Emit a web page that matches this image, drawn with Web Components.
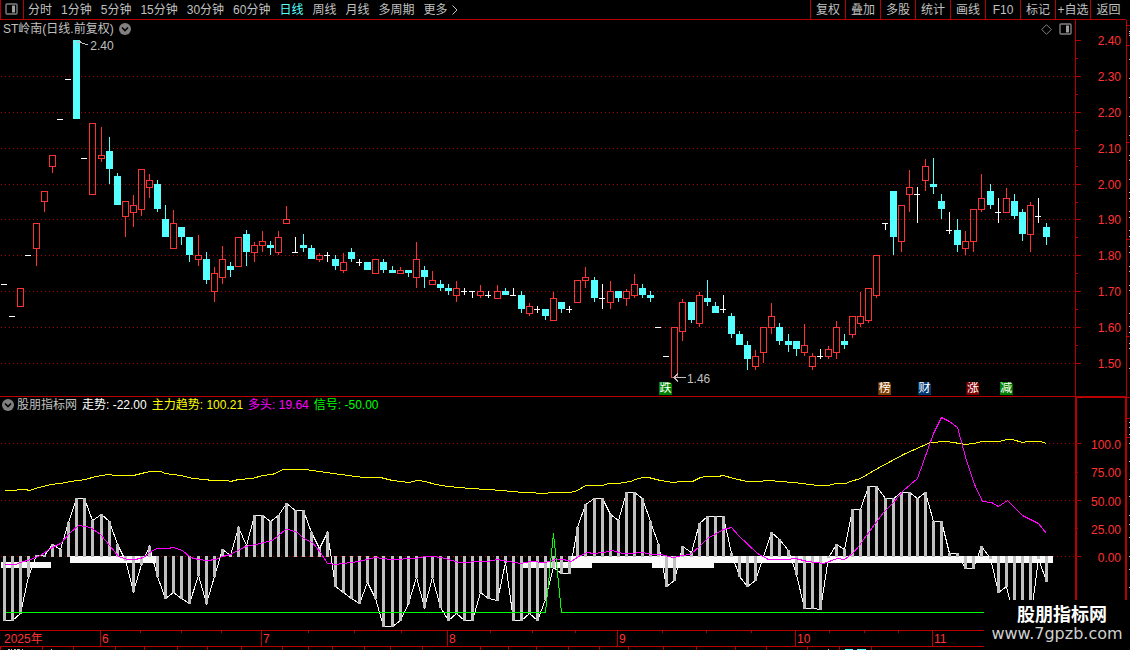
<!DOCTYPE html>
<html lang="zh-CN">
<head>
<meta charset="utf-8">
<title>ST岭南 日线</title>
<style>
  :root {
    --line: #b80000;
    --axis: #ff3232;
    --text: #c0c0c0;
    --down: #54ffff;
    --up: #ff3232;
  }
  html, body { margin: 0; background: #000; }
  body {
    font: 12px/16px "Liberation Sans", "Noto Sans CJK SC", sans-serif;
    color: var(--text);
  }
</style>
</head>
<body>
<stock-app></stock-app>

<script>
const barX = i => Math.floor(4.07 + 8.082 * i);

const define = (name, html, setup) => {
  const template = document.createElement('template');
  template.innerHTML = html;
  customElements.define(name, class extends HTMLElement {
    constructor() {
      super();
      this.attachShadow({ mode: 'open' }).append(template.content.cloneNode(true));
    }
    connectedCallback() {
      if (setup && !this.ready) { this.ready = true; setup(this, this.shadowRoot); }
    }
  });
};

/* ---------- small pieces ---------- */
define('tool-item', `
  <style>
    :host { display: flex; align-items: center; justify-content: center; }
    button { all: unset; font: inherit; color: inherit; white-space: nowrap; cursor: pointer; }
    :host([active]) { color: var(--down); }
  </style>
  <button type="button"><slot></slot></button>`);

define('split-icon', `
  <style>:host { display: block; width: 13px; height: 12px; } svg { display: block; }</style>
  <svg width="13" height="12" viewBox="0 0 13 12" aria-hidden="true">
    <rect x="1" y="1" width="11" height="10" rx="1" fill="none" stroke="#808080" stroke-width="1.4"/>
    <rect x="7" y="2.5" width="3" height="7" fill="#a0a0a0"/>
  </svg>`);

define('fold-button', `
  <style>
    :host { display: block; width: 12px; height: 12px; white-space: normal; }
    button { all: unset; display: block; cursor: pointer; }
    svg { display: block; }
  </style>
  <button type="button" aria-label="展开"><svg width="12" height="12" viewBox="0 0 12 12">
    <circle cx="6" cy="6" r="6" fill="#808080"/>
    <path d="M3 4.5 6 7.5 9 4.5" fill="none" stroke="#000" stroke-width="1.6"/>
  </svg></button>`);

define('event-flag', `
  <style>
    :host {
      display: block; width: 13px; height: 13px; color: #fff; text-align: center;
      font-size: 12px; line-height: 13px; overflow: hidden;
      clip-path: polygon(0 0, 11px 0, 13px 2px, 13px 13px, 0 13px);
    }
  </style><slot></slot>`);

/* ---------- toolbar ---------- */
define('quote-toolbar', `
  <style>
    :host { display: flex; height: 19px; border-bottom: 1px solid var(--line); border-left: 1px solid var(--line); }
    .icon { display: flex; align-items: center; width: 23px; box-sizing: border-box; padding: 0 0 2px 4px; border-right: 1px solid var(--line); }
    .periods { display: flex; flex: 1; gap: 9px; padding-left: 4px; }
    .more { display: flex; align-items: center; gap: 4px; }
    .tools { display: grid; grid-template-columns: repeat(8, 35px) 36px; }
    .tools tool-item { border-left: 1px solid var(--line); }
  </style>
  <div class="icon"><split-icon></split-icon></div>
  <nav class="periods" aria-label="周期">
    <tool-item>分时</tool-item><tool-item>1分钟</tool-item><tool-item>5分钟</tool-item>
    <tool-item>15分钟</tool-item><tool-item>30分钟</tool-item><tool-item>60分钟</tool-item>
    <tool-item active>日线</tool-item><tool-item>周线</tool-item><tool-item>月线</tool-item>
    <tool-item>多周期</tool-item>
    <div class="more"><tool-item>更多</tool-item>
      <svg width="6" height="10" viewBox="0 0 6 10" aria-hidden="true"><path d="M.5 .5 5 5 .5 9.5" fill="none" stroke="#c0c0c0"/></svg>
    </div>
  </nav>
  <div class="tools">
    <tool-item>复权</tool-item><tool-item>叠加</tool-item><tool-item>多股</tool-item>
    <tool-item>统计</tool-item><tool-item>画线</tool-item><tool-item>F10</tool-item>
    <tool-item>标记</tool-item><tool-item>+自选</tool-item><tool-item>返回</tool-item>
  </div>`);

/* ---------- candlestick plot ---------- */
/* u = rising, d = falling, x = flat; high, body top, body bottom, low */
const candles = `
x 284 284 285 285|x 316 316 317 317|u 288 288 307 307|x 255 255 256 256|u 223 223 249 266|u 191 191 202 212
u 155 155 167 173|x 119 119 120 120|x 79 79 80 80|d 40 40 119 119|x 158 158 159 159|u 123 123 195 195
u 127 155 159 162|d 137 151 169 184|d 173 176 205 205|u 201 201 217 237|u 195 205 213 227|u 169 169 210 216
u 174 180 188 198|d 180 184 209 212|d 205 219 237 237|u 210 223 249 249|d 227 227 237 245|d 237 237 255 262
u 235 255 260 266|d 252 259 280 284|u 267 273 292 302|u 246 259 278 284|d 262 266 270 277|u 237 237 267 267
d 230 234 252 266|u 242 245 253 262|u 231 241 246 252|d 241 245 248 255|u 231 237 253 255|u 206 219 224 224
x 237 252 253 253|d 234 245 248 252|d 245 248 259 259|u 253 255 260 262|x 252 255 256 262|d 255 259 266 270
u 253 262 271 273|d 248 252 259 262|x 259 262 263 266|d 262 262 270 270|u 259 259 274 274|d 259 262 270 273
d 266 270 273 273|u 267 270 274 274|d 270 270 273 277|u 242 259 278 288|d 266 270 277 288|u 271 280 285 285
d 280 284 288 291|d 284 288 291 295|u 281 288 296 302|x 288 291 292 295|x 291 291 292 298|u 285 291 296 298
x 291 295 296 298|u 285 291 299 299|d 288 291 295 295|x 288 295 296 296|d 291 295 309 313|u 303 306 314 316
x 306 309 310 313|d 309 309 316 320|u 292 298 321 321|d 302 302 309 313|x 306 309 310 313|u 280 280 303 303
u 267 277 281 288|d 277 280 298 302|x 284 298 299 309|u 281 291 303 309|d 291 291 298 302|u 289 291 299 306
u 274 284 296 298|d 284 288 295 298|d 291 295 298 302|x 327 327 328 328|x 356 356 357 357|u 327 327 378 378
u 299 302 332 341|d 302 302 320 323|u 292 295 324 327|d 280 298 302 306|d 302 306 313 313|x 295 309 310 313
d 313 316 334 338|d 331 334 345 345|d 341 345 359 370|u 350 356 367 370|u 327 327 353 363|u 303 316 328 334
d 323 327 341 345|d 334 341 345 352|d 341 341 349 356|u 324 345 353 356|u 353 356 367 370|x 349 356 357 359
u 346 349 357 359|u 321 327 353 359|d 334 341 345 349|u 316 316 335 338|u 292 316 324 327|u 288 288 321 323
u 255 255 296 298|x 223 223 224 230|d 191 191 237 255|u 205 205 242 252|u 170 187 195 212|x 187 194 195 223
u 159 166 181 191|d 158 184 187 194|d 194 201 209 219|x 212 230 231 234|d 219 230 245 252|u 231 241 249 255
u 209 209 242 252|u 174 198 210 212|d 184 191 205 209|x 198 212 213 223|u 188 198 213 213|d 194 201 216 219
d 209 212 234 241|u 202 205 235 252|x 198 216 217 223|d 223 227 237 245`.trim().split(/[|\n]/).map(s => s.split(' '));

const grid = (ys, w) => ys.map(y => `<path d="M1 ${y + .5}H${w}" stroke="#a80000" stroke-dasharray="1 3"/>`).join('');

define('price-chart', `
  <style>
    :host { display: block; position: relative; min-height: 240px; }
    svg.plot { position: absolute; inset: 0; width: 100%; height: 100%; }
    header { position: relative; display: flex; align-items: center; gap: 5px; height: 18px; padding: 0 3px; }
    h1 { margin: 0; font: inherit; }
    .right { margin-left: auto; display: flex; align-items: center; gap: 7px; }
    .mark { position: absolute; line-height: 16px; }
    event-flag { position: absolute; bottom: 1px; }
  </style>
  <svg class="plot" viewBox="0 20 1075 376" preserveAspectRatio="none" shape-rendering="crispEdges" aria-hidden="true"></svg>
  <header>
    <h1>ST岭南(日线.前复权)</h1><fold-button></fold-button>
    <div class="right">
      <svg width="11" height="11" viewBox="0 0 11 11" aria-hidden="true"><path d="M5.5 .7 10.3 5.5 5.5 10.3 .7 5.5Z" fill="none" stroke="#808080"/></svg>
      <split-icon></split-icon>
    </div>
  </header>
  <span class="mark" style="left:8.4%;top:4.8%">2.40</span>
  <span class="mark" style="left:63.9%;top:93.4%">1.46</span>
  <event-flag style="left:61.3%;background:#008000">跌</event-flag>
  <event-flag style="left:81.7%;background:#804000">榜</event-flag>
  <event-flag style="left:85.4%;background:#003870">财</event-flag>
  <event-flag style="left:89.9%;background:#800000">涨</event-flag>
  <event-flag style="left:93%;background:#008000">减</event-flag>`,
(host, root) => {
  const shapes = candles.map(([type, ...v], i) => {
    const [hi, top, bot, lo] = v.map(Number), x = barX(i);
    if (type === 'x') return `<path fill="#fff" d="M${x} ${hi}h1V${lo}h-1zM${x - 3} ${top}h6v1h-6z"/>`;
    const wick = `M${x} ${hi}h1V${top}h-1zM${x} ${bot}h1V${lo}h-1z`;
    return type === 'd'
      ? `<path fill="#54ffff" d="${wick}M${x - 3} ${top}h7V${bot}h-7z"/>`
      : `<path fill="#ff3232" d="${wick}"/><rect x="${x - 2.5}" y="${top + .5}" width="6" height="${bot - top - 1}" fill="none" stroke="#ff3232"/>`;
  }).join('');
  root.querySelector('.plot').innerHTML =
    grid([76, 112, 148, 184, 219, 255, 291, 327, 363], 1075) + shapes +
    `<g fill="none" stroke="#c0c0c0"><path d="M77.5 41.5 88 45M77.5 44V41.5H81"/><path d="M674 377.5H686M678 373.5 674 377.5 678 381.5"/></g>`;
});

/* ---------- indicator plot ---------- */
const trend = [620,620,613,576,555,555,544,549,522,498,498,520,514,521,544,560,591,564,546,576,598,592,598,603,575,603,576,549,555,527,545,515,515,521,515,503,510,510,532,548,532,586,592,598,603,582,598,626,626,620,603,577,607,577,607,620,613,620,620,592,598,600,562,620,620,613,620,599,567,573,573,527,504,498,498,514,520,492,492,498,521,544,586,580,546,552,523,516,516,516,553,576,586,580,556,532,539,550,574,608,608,609,557,544,549,509,509,486,486,498,498,492,492,498,492,521,521,553,553,568,568,546,558,592,586,620,620,620,558,581];
const yellow = '4,490 16,490 17,489 25,489 29,490 35,488 50,484 60,483 70,481 85,479 95,476 108,474 115,475 133,475 145,472 150,471 160,471 165,473 180,475 193,478 213,480 227,480 230,481 238,479 252,478 262,475 272,474 283,469 305,469 312,470 333,473 363,477 380,477 392,480 400,481 408,482 417,480 425,481 435,484 448,486 470,488 502,490 510,491 525,492 545,493 550,492 570,492 577,490 585,485 602,485 608,483 618,483 630,481 635,479 642,477 648,477 660,480 673,482 680,481 692,481 700,477 705,476 717,476 723,475 733,478 747,481 757,481 768,480 780,481 793,482 818,485 828,485 835,483 845,483 850,481 860,478 877,468 903,454 930,442 945,441 953,442 965,444 973,443 982,441 998,441 1007,439 1012,439 1022,442 1028,441 1040,441 1046,443';
const magenta = '4,564 15,564 20,562 30,559 40,555 50,548 60,543 70,532 78,525 90,527 100,534 110,546 118,556 127,559 135,559 143,557 152,550 157,548 167,548 173,547 182,550 190,557 198,559 207,560 215,559 222,556 230,554 245,546 255,544 272,540 278,535 285,529 288,529 297,532 303,538 312,542 320,552 327,563 335,564 343,563 358,561 375,557 390,559 415,558 425,556 433,556 445,558 458,562 465,562 477,561 487,561 497,559 508,561 520,563 530,561 545,562 555,559 563,559 571,561 578,556 587,552 593,553 603,552 612,550 622,553 630,553 642,552 652,554 660,554 673,557 682,555 690,554 699,546 707,538 723,529 731,527 738,535 757,553 768,559 787,559 795,558 807,561 823,563 837,558 844,559 852,553 859,545 863,539 883,512 893,502 903,490 917,478 933,433 941,417 949,421 957,427 966,460 974,484 982,501 991,502 998,506 1007,500 1022,515 1038,523 1046,533';

define('indicator-chart', `
  <style>
    :host { display: block; position: relative; min-height: 160px; }
    svg.plot { position: absolute; inset: 0; width: 100%; height: 100%; }
    header { position: relative; display: flex; align-items: center; gap: 5px; height: 16px; padding-left: 2px; white-space: nowrap; }
    fold-button { margin-right: -2px; }
  </style>
  <svg class="plot" viewBox="0 397 1075 233" preserveAspectRatio="none" shape-rendering="crispEdges" aria-hidden="true"></svg>
  <header><fold-button></fold-button><span>股朋指标网</span><span style="color:#fff">走势: -22.00</span><span style="color:#ff0">主力趋势: 100.21</span><span style="color:#f0f">多头: 19.64</span><span style="color:#0f0">信号: -50.00</span></header>`,
(host, root) => {
  const bars = trend.map((y, i) => {
    const x = barX(i) - 1;
    return y < 557 ? `M${x} ${y}h3V557h-3z` : `M${x} 556h3V${y + 1}h-3z`;
  }).join('');
  const line = trend.map((y, i) => `${barX(i)},${y}`).join(' ');
  root.querySelector('.plot').innerHTML = grid([443, 500, 556], 1075) +
    `<path fill="#fafafa" d="M1 562h50v6H1zM70 556h86v7H70zM523 562h69v6h-69zM571 556h482v7H571zM652 562h62v6h-62z"/>
     <g fill="none" transform="translate(.5 .5)"><polyline points="${line}" stroke="#fff"/></g>
     <path fill="#c0c0c0" d="${bars}"/>
     <g fill="none" transform="translate(.5 .5)">
       <polyline points="${yellow}" stroke="#ff0"/>
       <polyline points="${magenta}" stroke="#f0f"/>
       <polyline points="5,612 545,612 553,533 561,612 1046,612" stroke="#0f0"/>
     </g>`;
});

/* ---------- value axes ---------- */
const axisStyle = `
  :host { display: flex; flex-direction: column; justify-content: space-between; position: relative; box-sizing: border-box; text-align: right; color: var(--axis); }
  svg { position: absolute; inset: 0; width: 100%; height: 100%; }
  span { position: relative; }`;
const labels = list => list.map(t => `<span>${t}</span>`).join('');

define('price-axis', `
  <style>${axisStyle} :host { padding: 13px 5px 24px 0; }</style>
  <svg viewBox="1075 20 51 376" preserveAspectRatio="none" shape-rendering="crispEdges" aria-hidden="true">
    <path fill="none" stroke="#b80000" d="M1075.5 20V396
      M1075 40.5h6M1075 76.5h6M1075 112.5h6M1075 148.5h6M1075 184.5h6M1075 219.5h6M1075 255.5h6M1075 291.5h6M1075 327.5h6M1075 363.5h6
      M1075 58.5h3M1075 94.5h3M1075 130.5h3M1075 166.5h3M1075 202.5h3M1075 237.5h3M1075 273.5h3M1075 309.5h3M1075 345.5h3"/>
  </svg>
  ${labels(['2.40', '2.30', '2.20', '2.10', '2.00', '1.90', '1.80', '1.70', '1.60', '1.50'])}`);

define('indicator-axis', `
  <style>${axisStyle} :host { padding: 40px 5px 64px 0; }</style>
  <svg viewBox="1075 397 51 233" preserveAspectRatio="none" shape-rendering="crispEdges" aria-hidden="true">
    <path fill="none" stroke="#b80000" stroke-width="2" d="M1076 397V630"/>
    <path fill="none" stroke="#b80000" d="M1075 397.5h51M1125.5 397V630
      M1076 443.5h5M1076 500.5h5M1076 556.5h5M1076 472.5h2M1076 528.5h2"/>
  </svg>
  ${labels(['100.0', '75.00', '50.00', '25.00', '0.00'])}`);

/* ---------- time axis ---------- */
define('time-axis', `
  <style>
    :host { display: grid; grid-template-columns: 100fr 161fr 186fr 170fr 178fr 137fr 194fr; position: relative; height: 15px;
      border-top: 1px solid var(--line); border-bottom: 1px solid var(--line); color: var(--axis); }
    svg { position: absolute; left: 0; top: 0; width: 100%; height: 2px; }
    span { border-left: 1px solid var(--line); padding-left: 1px; line-height: 16px; }
    span:first-of-type { border: 0; padding-left: 4px; }
  </style>
  <svg viewBox="0 0 1126 2" preserveAspectRatio="none" shape-rendering="crispEdges" aria-hidden="true"></svg>
  <span>2025年</span><span>6</span><span>7</span><span>8</span><span>9</span><span>10</span><span>11</span>`,
(host, root) => {
  root.querySelector('svg').innerHTML = `<path stroke="#b80000" d="${
    [140, 181, 221, 308, 354, 401, 490, 532, 575, 662, 706, 751, 829, 864, 898].map(x => `M${x + .5} 0v2`).join('')}"/>`;
});

/* ---------- clipped neighbours of the chart: bottom row and right column ---------- */
define('bottom-strip', `
  <style>:host { display: block; height: 3px; } svg { display: block; width: 100%; height: 3px; }</style>
  <svg viewBox="0 647 1126 3" preserveAspectRatio="none" shape-rendering="crispEdges" aria-hidden="true"></svg>`,
(host, root) => {
  root.querySelector('svg').innerHTML = `<path stroke="#b80000" d="${
    [0, 42, 73, 115, 144, 177, 207, 241, 282, 308, 332, 364, 390, 422, 480, 508, 536, 568, 599, 628, 663, 696, 735, 766, 807, 839, 871]
      .map(x => `M${x + .5} 647v3`).join('')}"/>
    <path fill="#c0c0c0" d="M8 649h2v1h-2zM11 649h1v1h-1zM14 649h2v1h-2zM17 649h3v1h-3zM22 649h1v1h-1zM51 649h1v1h-1zM828 649h1v1h-1z"/>
    <path fill="#54ffff" d="M845 649h8v1h-8zM857 649h9v1h-9z"/>`;
});

define('edge-strip', `
  <style>:host { display: block; position: relative; } svg { position: absolute; inset: 0; width: 100%; height: 100%; }</style>
  <svg viewBox="1126 20 4 630" preserveAspectRatio="none" shape-rendering="crispEdges" aria-hidden="true"></svg>`,
(host, root) => {
  const marks = [31,33,35,59,78,97,116,135,155,160,179,192,198,211,217,230,236,246,252,266,271,285,290,313,326,332,343,348,368,422,427,434,443,461,479,496,515,524,537,556,569,587];
  root.querySelector('svg').innerHTML =
    `<path stroke="#b80000" d="M1126.5 20V650${[25, 45, 142, 239, 336, 397, 418, 437].map(y => `M1126 ${y + .5}h4`).join('')}"/>
     <path fill="#c0c0c0" d="${marks.map(y => `M1129 ${y}h1v1h-1z`).join('')}"/>`;
});

define('site-mark', `
  <style>
    :host { display: block; width: 146px; height: 50px; background: #000; text-align: center; overflow: hidden; padding-top: 5px; box-sizing: border-box; }
    strong { display: block; font: bold 18px/20px "Liberation Sans", "Noto Sans CJK SC", sans-serif; color: #fff; padding-left: 10px; }
    span { display: block; font: 16px/18px "DejaVu Sans", sans-serif; color: #d0d0d0; }
  </style>
  <strong>股朋指标网</strong><span>www.7gpzb.com</span>`);

/* ---------- page ---------- */
define('stock-app', `
  <style>
    :host { display: grid; position: relative; min-height: 100vh; overflow: hidden;
      grid-template-columns: 1fr 51px 4px;
      grid-template-rows: 20px minmax(0, 377fr) minmax(0, 233fr) 17px 3px; }
    quote-toolbar { grid-column: 1 / 3; }
    edge-strip { grid-column: 3; grid-row: 2 / 6; }
    price-chart, price-axis { grid-row: 2; border-bottom: 1px solid var(--line); }
    indicator-chart, indicator-axis { grid-row: 3; }
    time-axis { grid-row: 4; grid-column: 1 / 3; }
    bottom-strip { grid-row: 5; grid-column: 1 / 3; }
    site-mark { position: absolute; right: 0; bottom: 0; }
  </style>
  <quote-toolbar></quote-toolbar>
  <price-chart></price-chart><price-axis></price-axis>
  <indicator-chart></indicator-chart><indicator-axis></indicator-axis>
  <time-axis></time-axis>
  <bottom-strip></bottom-strip>
  <edge-strip></edge-strip>
  <site-mark></site-mark>`);
</script>
</body>
</html>
